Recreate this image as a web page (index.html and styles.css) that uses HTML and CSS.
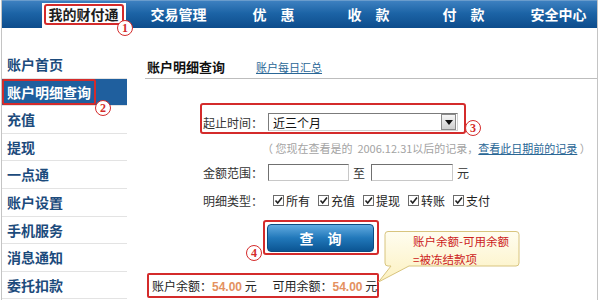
FILE: index.html
```html
<!DOCTYPE html>
<html>
<head>
  <title>账户明细查询</title>
  <link rel="stylesheet" href="styles.css">
</head>
<body>
  <div class="page">
    <div class="nav">
      <div class="nav-item active"><span class="tab"><span class="mark">我的财付通</span></span></div>
      <div class="nav-item">交易管理</div>
      <div class="nav-item">优　惠</div>
      <div class="nav-item">收　款</div>
      <div class="nav-item">付　款</div>
      <div class="nav-item">安全中心</div>
    </div>

    <div class="content">
      <ul class="side">
        <li>账户首页</li>
        <li class="current"><span class="mark">账户明细查询</span></li>
        <li>充值</li>
        <li>提现</li>
        <li>一点通</li>
        <li>账户设置</li>
        <li>手机服务</li>
        <li>消息通知</li>
        <li>委托扣款</li>
      </ul>

      <div class="main">
        <div class="head">
          <h2>账户明细查询</h2>
          <a href="#">账户每日汇总</a>
        </div>

        <div class="form">
          <div class="range">
            <label>起止时间：</label>
            <div class="select">
              近三个月
              <span class="arrow">
                <svg width="8" height="5" viewBox="0 0 8 5"><path d="M0 0 H8 L4 5 Z" fill="#111"/></svg>
              </span>
            </div>
          </div>

          <div class="hint">（ 您现在查看是的 &nbsp;2006.12.31以后的记录，<a href="#">查看此日期前的记录</a> ）</div>

          <div class="row">
            <label>金额范围：</label>
            <input type="text" class="amount">
            <span class="to">至</span>
            <input type="text" class="amount wide">
            <span class="unit">元</span>
          </div>

          <div class="row types">
            <label>明细类型：</label>
            <span class="check"><span class="box"><svg width="9" height="9" viewBox="0 0 9 9"><path d="M1.5 4.5 L3.7 7 L8 1.5" fill="none" stroke="#222" stroke-width="1.6"/></svg></span>所有</span>
            <span class="check"><span class="box"><svg width="9" height="9" viewBox="0 0 9 9"><path d="M1.5 4.5 L3.7 7 L8 1.5" fill="none" stroke="#222" stroke-width="1.6"/></svg></span>充值</span>
            <span class="check"><span class="box"><svg width="9" height="9" viewBox="0 0 9 9"><path d="M1.5 4.5 L3.7 7 L8 1.5" fill="none" stroke="#222" stroke-width="1.6"/></svg></span>提现</span>
            <span class="check"><span class="box"><svg width="9" height="9" viewBox="0 0 9 9"><path d="M1.5 4.5 L3.7 7 L8 1.5" fill="none" stroke="#222" stroke-width="1.6"/></svg></span>转账</span>
            <span class="check"><span class="box"><svg width="9" height="9" viewBox="0 0 9 9"><path d="M1.5 4.5 L3.7 7 L8 1.5" fill="none" stroke="#222" stroke-width="1.6"/></svg></span>支付</span>
          </div>
        </div>

        <div class="query-box"><button type="button">查　询</button></div>

        <div class="balance">
          账户余额：<b>54.00</b> 元
          <span class="avail">可用余额：<b>54.00</b> 元</span>
        </div>
      </div>
    </div>

    <!-- annotations -->
    <span class="num n1">1</span>
    <span class="num n2">2</span>
    <span class="num n3">3</span>
    <span class="num n4">4</span>

    <div class="tip">
      <svg width="144" height="54" viewBox="0 0 144 54">
        <defs>
          <linearGradient id="tg" x1="0" y1="0" x2="0" y2="1">
            <stop offset="0" stop-color="#fffdf0"/>
            <stop offset="1" stop-color="#fcf1c0"/>
          </linearGradient>
        </defs>
        <path d="M11 1.5 H139 a3 3 0 0 1 3 3 V33 a3 3 0 0 1 -3 3 H32 L1.5 52 L14 36 H11 a3 3 0 0 1 -3 -3 V4.5 a3 3 0 0 1 3 -3 Z" fill="url(#tg)" stroke="#d8c47e"/>
      </svg>
      <div class="tip-text">账户余额-可用余额<br>=被冻结款项</div>
    </div>
  </div>
</body>
</html>
```

FILE: styles.css
```css
body {
  margin: 0;
  background-color: #FFFFFF;
  font-family: "Noto Sans CJK SC", "Liberation Sans", sans-serif;
}

.page {
  position: relative;
  width: 595px;
  height: 300px;
  margin-left: 1px;
  border-left: 1px solid #C4C4C4;
  border-right: 1px solid #C4C4C4;
  overflow: hidden;
}

/* top navigation */
.nav {
  display: flex;
  height: 27px;
  padding-left: 34px;
  border-top: 1px solid #6A9CCC;
  background: linear-gradient(#3D80C0, #1C64A6 45%, #0D4C8C);
}

.nav-item {
  flex: none;
  width: 95px;
  text-align: center;
  color: #FFFFFF;
  font-size: 14px;
  font-weight: bold;
  line-height: 27px;
}

.nav-item.active {
  display: flex;
  justify-content: center;
  align-items: flex-start;
}

.tab {
  display: block;
  margin-top: 2px;
  padding: 1px 2px 3px;
  background-color: #FFFFFF;
  line-height: 17px;
}

.tab .mark {
  display: block;
  padding: 0 3px;
  border: 2px solid #D42B2B;
  border-radius: 3px;
  color: #1E1E1E;
}

.content {
  display: flex;
  margin-top: 23px;
}

/* left menu */
.side {
  flex: none;
  width: 125px;
  margin: 0;
  padding: 0;
  list-style: none;
}

.side li {
  height: 27.6px;
  box-sizing: border-box;
  padding-left: 5px;
  border-bottom: 1px solid #E3E3E3;
  color: #1C4B7C;
  font-size: 14px;
  font-weight: bold;
  line-height: 26.6px;
}

.side li.current {
  padding-left: 0;
  background-color: #1F5F9E;
  color: #FFFFFF;
}

.side .mark {
  display: block;
  width: fit-content;
  padding: 0 3px;
  border: 2px solid #D42B2B;
  border-radius: 2px;
  line-height: 22px;
}

/* main area */
.main {
  flex: 1;
  padding-left: 18px;
}

.head {
  display: flex;
  align-items: center;
  height: 28px;
  box-sizing: border-box;
  padding: 4px 0 0 2px;
  border-bottom: 1px solid #BDBDBD;
}

.head h2 {
  margin: 0;
  color: #111111;
  font-size: 13px;
  font-weight: bold;
}

.head a {
  margin-left: 31px;
  color: #2A6796;
  font-size: 11px;
}

.form {
  padding-left: 55px;
  color: #333333;
  font-size: 12px;
}

.form label {
  flex: none;
  width: 65px;
}

.range {
  display: flex;
  align-items: center;
  width: 266px;
  box-sizing: border-box;
  margin-top: 24px;
  padding: 8px 0 1px 1px;
  border: 2px solid #D42B2B;
  border-radius: 3px;
}

.select {
  display: flex;
  align-items: center;
  width: 190px;
  height: 18px;
  box-sizing: border-box;
  padding-left: 4px;
  border: 1px solid;
  border-color: #7B7B7B #D0D0D0 #D0D0D0 #7B7B7B;
  color: #111111;
}

.arrow {
  display: flex;
  align-items: center;
  justify-content: center;
  width: 13px;
  height: 14px;
  margin: 0 1px 0 auto;
  border: 1px solid #8A8A8A;
  background: linear-gradient(#F6F6F6, #CFCFCF);
}

.hint {
  margin: 6px 0 0 62px;
  color: #A3A3A3;
  font-size: 11px;
  line-height: 16px;
  white-space: nowrap;
}

.hint a {
  color: #2A6796;
}

.row {
  display: flex;
  align-items: center;
  height: 17px;
  margin-top: 8px;
  padding-left: 3px;
}

.amount {
  width: 81px;
  height: 17px;
  box-sizing: border-box;
  margin: 0;
  padding: 0;
  border: 1px solid;
  border-color: #707070 #C8C8C8 #C8C8C8 #707070;
}

.amount.wide {
  width: 82px;
}

.to {
  margin: 0 6px 0 4px;
}

.unit {
  margin-left: 4px;
}

.types {
  height: 14px;
  margin-top: 12px;
}

.check {
  display: flex;
  align-items: center;
  margin-right: 8px;
  color: #222222;
}

.types .check:first-of-type {
  margin-left: 5px;
}

.box {
  display: flex;
  align-items: center;
  justify-content: center;
  width: 11px;
  height: 11px;
  box-sizing: border-box;
  margin-right: 2px;
  border: 1px solid #6B6B6B;
  background-color: #FFFFFF;
}

.query-box {
  width: fit-content;
  margin: 13px 0 0 118px;
  padding: 2px 3px 1px 2px;
  border: 2px solid #D42B2B;
  border-radius: 3px;
}

.query-box button {
  display: block;
  width: 107px;
  height: 28px;
  border: 1px solid #0D4B80;
  border-radius: 4px;
  background: linear-gradient(#62ABE0, #2178BA 50%, #0B5593);
  color: #FFFFFF;
  font-family: inherit;
  font-size: 14px;
  font-weight: bold;
}

.balance {
  width: 232px;
  height: 25px;
  box-sizing: border-box;
  margin: 18px 0 0 2px;
  padding: 2px 0 0 3px;
  border: 2px solid #D42B2B;
  border-radius: 2px;
  color: #222222;
  font-size: 12px;
  white-space: nowrap;
}

.balance b {
  color: #E4915F;
  font-family: "Liberation Sans", sans-serif;
}

.avail {
  margin-left: 13px;
}

/* numbered markers */
.num {
  position: absolute;
  width: 14px;
  height: 14px;
  border: 1.5px solid #D42B2B;
  border-radius: 50%;
  background-color: #FFFFFF;
  color: #D42B2B;
  font: bold 12px/14px "Liberation Serif", serif;
  text-align: center;
}

.n1 { left: 115px; top: 20px; }
.n2 { left: 93px; top: 100px; }
.n3 { left: 463px; top: 120px; }
.n4 { left: 244px; top: 245px; }

.tip {
  position: absolute;
  left: 375px;
  top: 230px;
  width: 144px;
  height: 54px;
}

.tip svg {
  display: block;
}

.tip-text {
  position: absolute;
  left: 36px;
  top: 2px;
  color: #CC2020;
  font-size: 11.5px;
  line-height: 18px;
  white-space: nowrap;
}
```
